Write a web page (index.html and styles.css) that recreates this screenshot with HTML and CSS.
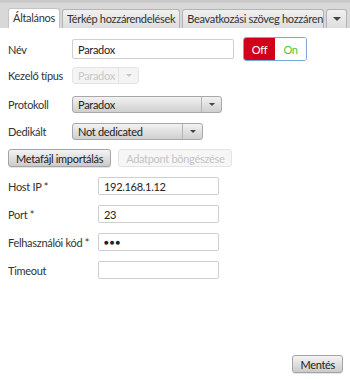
FILE: index.html
```html
<!DOCTYPE html>
<html lang="hu">
<head>
  <meta charset="UTF-8" />
  <title>Általános</title>
  <link rel="stylesheet" href="styles.css">
</head>
<body>
  <div class="tabbar">
    <div class="tab active">Általános</div>
    <div class="tab">Térkép hozzárendelések</div>
    <div class="tab clip">Beavatkozási szöveg hozzárendelések</div>
    <div class="tab-menu"><span class="arrow"></span></div>
  </div>

  <div class="content">
    <div class="grid top">
      <label>Név</label>
      <div class="row">
        <input class="text name" type="text" value="Paradox">
        <div class="toggle">
          <span class="off">Off</span>
          <span class="on">On</span>
        </div>
      </div>

      <label>Kezelő típus</label>
      <div class="row">
        <div class="combo disabled w-type"><span class="value">Paradox</span><span class="drop"><span class="arrow"></span></span></div>
      </div>

      <label>Protokoll</label>
      <div class="row">
        <div class="combo w-proto"><span class="value">Paradox</span><span class="drop"><span class="arrow"></span></span></div>
      </div>

      <label>Dedikált</label>
      <div class="row">
        <div class="combo w-ded"><span class="value">Not dedicated</span><span class="drop"><span class="arrow"></span></span></div>
      </div>
    </div>

    <div class="actions">
      <button class="btn">Metafájl importálás</button>
      <button class="btn" disabled>Adatpont böngészése</button>
    </div>

    <div class="grid conn">
      <label>Host IP *</label>
      <input class="text field" type="text" value="192.168.1.12">
      <label>Port *</label>
      <input class="text field" type="text" value="23">
      <label>Felhasználói kód *</label>
      <input class="text field pass" type="text" value="●●●">
      <label>Timeout</label>
      <input class="text field" type="text" value="">
    </div>
  </div>

  <div class="footer">
    <button class="btn">Mentés</button>
  </div>
</body>
</html>
```

FILE: styles.css
```css
body {
  margin: 0;
  width: 350px;
  height: 380px;
  font-family: 'Lato', 'Open Sans', sans-serif;
  font-size: 11px;
  letter-spacing: -0.3px;
  color: #333;
  background: #fff;
  display: flex;
  flex-direction: column;
  overflow: hidden;
}

.tabbar {
  display: flex;
  align-items: flex-end;
  gap: 2px;
  height: 28px;
  padding: 0 3px 0 8px;
  background: linear-gradient(#c8c8c8 0, #c8c8c8 2px, #d8d8d8 3px, #d8d8d8);
  box-sizing: border-box;
}

.tab {
  height: 19px;
  line-height: 18px;
  padding: 0 4px;
  border: 1px solid #b4b4b4;
  border-bottom: none;
  border-radius: 3px 3px 0 0;
  background: linear-gradient(#f0f0f0, #dedede);
  color: #333;
  white-space: nowrap;
  box-sizing: border-box;
}

.tab.active {
  background: #fff;
  height: 20px;
  border-color: #c4c4c4;
}

.tab.clip {
  width: 145px;
  overflow: hidden;
}

.tab-menu {
  margin-left: auto;
  width: 21px;
  height: 19px;
  border: 1px solid #b4b4b4;
  border-bottom: none;
  border-radius: 3px 3px 0 0;
  background: linear-gradient(#f0f0f0, #dedede);
  display: flex;
  align-items: center;
  justify-content: center;
  box-sizing: border-box;
}

.arrow {
  width: 0;
  height: 0;
  border-left: 4px solid transparent;
  border-right: 4px solid transparent;
  border-top: 4px solid #444;
}

.content {
  flex: 1;
  padding: 9px 8px 0;
}

.grid {
  display: grid;
  align-items: center;
}

.grid label {
  color: #333;
}

.grid.top {
  grid-template-columns: 64px 1fr;
  grid-template-rows: 24px 28px 31px 23px;
}

.row {
  display: flex;
  align-items: center;
  gap: 9px;
}

.text {
  font-family: inherit;
  font-size: 11px;
  letter-spacing: -0.3px;
  color: #222;
  border: 1px solid #cfcfcf;
  border-radius: 2px;
  padding: 0 5px;
  height: 19px;
  box-sizing: border-box;
  outline: none;
}

.name {
  width: 162px;
  height: 20px;
}

.toggle {
  display: flex;
  width: 64px;
  height: 24px;
  border: 1px solid #7aa6d8;
  border-radius: 3px;
  overflow: hidden;
  box-sizing: border-box;
}

.toggle span {
  flex: 1;
  display: flex;
  align-items: center;
  justify-content: center;
}

.toggle .off {
  background: #d0021b;
  color: #fff;
}

.toggle .on {
  background: #fff;
  color: #3dcc3d;
}

.combo {
  display: flex;
  height: 17px;
  border: 1px solid #a8a8a8;
  border-radius: 3px;
  background: linear-gradient(#f2f2f2, #cfcfcf);
  box-sizing: border-box;
  overflow: hidden;
}

.combo .value {
  flex: 1;
  padding-left: 5px;
  line-height: 15px;
  color: #222;
}

.combo .drop {
  width: 19px;
  border-left: 1px solid #b4b4b4;
  display: flex;
  align-items: center;
  justify-content: center;
}

.combo .drop .arrow {
  border-left-width: 3px;
  border-right-width: 3px;
  border-top-width: 3px;
}

.combo.disabled {
  border-color: #e4e4e4;
  background: #f4f4f4;
}

.combo.disabled .value {
  color: #c8c8c8;
}

.combo.disabled .drop {
  border-left-color: #e4e4e4;
}

.combo.disabled .arrow {
  border-top-color: #c8c8c8;
}

.w-type { width: 67px; }
.w-proto { width: 150px; }
.w-ded { width: 131px; }

.actions {
  display: flex;
  gap: 7px;
  margin-top: 6px;
}

.btn {
  font-family: inherit;
  font-size: 11px;
  letter-spacing: -0.3px;
  color: #222;
  height: 18px;
  padding: 0 7px;
  border: 1px solid #a4a4a4;
  border-radius: 3px;
  background: linear-gradient(#f4f4f4, #cbcbcb);
  box-shadow: 0 1px 0 #e6e6e6;
  line-height: 15px;
}

.btn:disabled {
  color: #c4c4c4;
  border-color: #e4e4e4;
  background: #f6f6f6;
  box-shadow: none;
}

.grid.conn {
  grid-template-columns: 90px 121px;
  row-gap: 10px;
  margin-top: 10px;
}

.field {
  width: 121px;
  height: 18px;
}

.pass {
  font-size: 8px;
  letter-spacing: 1px;
}

.footer {
  display: flex;
  justify-content: flex-end;
  padding: 0 7px 7px;
}
```
